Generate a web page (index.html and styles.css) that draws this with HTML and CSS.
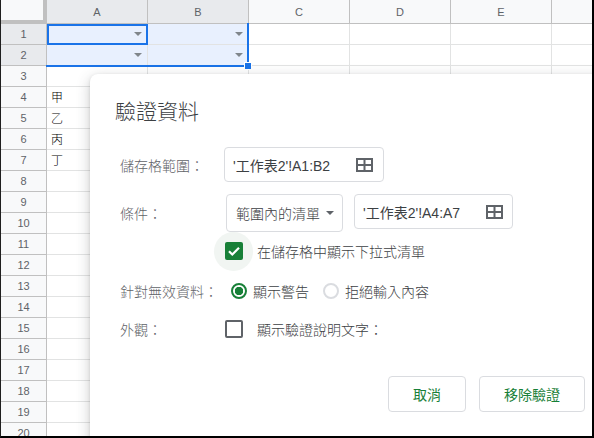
FILE: index.html
```html
<!DOCTYPE html>
<html lang="zh-Hant">
<head>
<meta charset="utf-8">
<title>驗證資料</title>
<link rel="stylesheet" href="styles.css">
</head>
<body>
<div class="screen">
  <div class="sheet">
    <div class="corner"></div>
    <div class="colhead sel">A</div>
    <div class="colhead sel">B</div>
    <div class="colhead">C</div>
    <div class="colhead">D</div>
    <div class="colhead">E</div>
    <div class="colhead"></div>

    <div class="rowhead sel">1</div>
    <div class="cell range"><span class="dd"></span></div>
    <div class="cell range"><span class="dd"></span></div>
    <div class="cell"></div><div class="cell"></div><div class="cell"></div><div class="cell"></div>

    <div class="rowhead sel">2</div>
    <div class="cell range"><span class="dd"></span></div>
    <div class="cell range"><span class="dd"></span></div>
    <div class="cell"></div><div class="cell"></div><div class="cell"></div><div class="cell"></div>

    <div class="rowhead">3</div>
    <div class="cell"></div><div class="cell"></div><div class="cell"></div><div class="cell"></div><div class="cell"></div><div class="cell"></div>

    <div class="rowhead">4</div>
    <div class="cell">甲</div><div class="cell"></div><div class="cell"></div><div class="cell"></div><div class="cell"></div><div class="cell"></div>

    <div class="rowhead">5</div>
    <div class="cell">乙</div><div class="cell"></div><div class="cell"></div><div class="cell"></div><div class="cell"></div><div class="cell"></div>

    <div class="rowhead">6</div>
    <div class="cell">丙</div><div class="cell"></div><div class="cell"></div><div class="cell"></div><div class="cell"></div><div class="cell"></div>

    <div class="rowhead">7</div>
    <div class="cell">丁</div><div class="cell"></div><div class="cell"></div><div class="cell"></div><div class="cell"></div><div class="cell"></div>

    <div class="rowhead">8</div>
    <div class="cell"></div><div class="cell"></div><div class="cell"></div><div class="cell"></div><div class="cell"></div><div class="cell"></div>
    <div class="rowhead">9</div>
    <div class="cell"></div><div class="cell"></div><div class="cell"></div><div class="cell"></div><div class="cell"></div><div class="cell"></div>
    <div class="rowhead">10</div>
    <div class="cell"></div><div class="cell"></div><div class="cell"></div><div class="cell"></div><div class="cell"></div><div class="cell"></div>
    <div class="rowhead">11</div>
    <div class="cell"></div><div class="cell"></div><div class="cell"></div><div class="cell"></div><div class="cell"></div><div class="cell"></div>
    <div class="rowhead">12</div>
    <div class="cell"></div><div class="cell"></div><div class="cell"></div><div class="cell"></div><div class="cell"></div><div class="cell"></div>
    <div class="rowhead">13</div>
    <div class="cell"></div><div class="cell"></div><div class="cell"></div><div class="cell"></div><div class="cell"></div><div class="cell"></div>
    <div class="rowhead">14</div>
    <div class="cell"></div><div class="cell"></div><div class="cell"></div><div class="cell"></div><div class="cell"></div><div class="cell"></div>
    <div class="rowhead">15</div>
    <div class="cell"></div><div class="cell"></div><div class="cell"></div><div class="cell"></div><div class="cell"></div><div class="cell"></div>
    <div class="rowhead">16</div>
    <div class="cell"></div><div class="cell"></div><div class="cell"></div><div class="cell"></div><div class="cell"></div><div class="cell"></div>
    <div class="rowhead">17</div>
    <div class="cell"></div><div class="cell"></div><div class="cell"></div><div class="cell"></div><div class="cell"></div><div class="cell"></div>
    <div class="rowhead">18</div>
    <div class="cell"></div><div class="cell"></div><div class="cell"></div><div class="cell"></div><div class="cell"></div><div class="cell"></div>
    <div class="rowhead">19</div>
    <div class="cell"></div><div class="cell"></div><div class="cell"></div><div class="cell"></div><div class="cell"></div><div class="cell"></div>
    <div class="rowhead">20</div>
    <div class="cell"></div><div class="cell"></div><div class="cell"></div><div class="cell"></div><div class="cell"></div><div class="cell"></div>
  </div>

  <div class="sel-range"></div>
  <div class="sel-active"></div>
  <div class="sel-handle"></div>

  <div class="dialog">
    <h1 class="title">驗證資料</h1>

    <div class="row row-range">
      <div class="label">儲存格範圍：</div>
      <div class="range-input">
        <span class="value">'工作表2'!A1:B2</span>
        <svg class="grid-icon" width="17" height="14" viewBox="0 0 17 14"><rect x="1" y="1" width="15" height="12" fill="none" stroke="#5f6368" stroke-width="2"/><path d="M8.5 1v12M1 7h15" stroke="#5f6368" stroke-width="2" fill="none"/></svg>
      </div>
    </div>

    <div class="row row-cond">
      <div class="label">條件：</div>
      <div class="select">
        <span class="value">範圍內的清單</span>
        <span class="caret"></span>
      </div>
      <div class="range-input second">
        <span class="value">'工作表2'!A4:A7</span>
        <svg class="grid-icon" width="17" height="14" viewBox="0 0 17 14"><rect x="1" y="1" width="15" height="12" fill="none" stroke="#5f6368" stroke-width="2"/><path d="M8.5 1v12M1 7h15" stroke="#5f6368" stroke-width="2" fill="none"/></svg>
      </div>
    </div>

    <div class="row row-check">
      <div class="label"></div>
      <span class="checkbox checked">
        <svg width="18" height="18" viewBox="0 0 18 18"><path d="M4 9.2l3.3 3.3L14 5.8" fill="none" stroke="#fff" stroke-width="2.2"/></svg>
      </span>
      <span class="opt opt-check">在儲存格中顯示下拉式清單</span>
    </div>

    <div class="row row-radio">
      <div class="label">針對無效資料：</div>
      <span class="radio on"></span>
      <span class="opt opt-radio">顯示警告</span>
      <span class="radio"></span>
      <span class="opt opt-radio">拒絕輸入內容</span>
    </div>

    <div class="row row-look">
      <div class="label">外觀：</div>
      <span class="checkbox"></span>
      <span class="opt opt-check">顯示驗證說明文字：</span>
    </div>

    <div class="actions">
      <button class="btn btn-cancel">取消</button>
      <button class="btn btn-remove">移除驗證</button>
    </div>
  </div>
</div>
</body>
</html>
```

FILE: styles.css
```css
html, body {
  margin: 0;
  padding: 0;
  background: #fff;
}

.screen {
  position: relative;
  width: 594px;
  height: 438px;
  box-sizing: border-box;
  border-left: 1px solid #1f1f1f;
  border-right: 2px solid #000;
  border-bottom: 2px solid #000;
  overflow: hidden;
  font-family: "Liberation Sans", "Noto Sans CJK TC", sans-serif;
}

/* ---------- spreadsheet ---------- */
.sheet {
  display: grid;
  grid-template-columns: 46px repeat(6, 101px);
  grid-template-rows: 24px repeat(20, 21px);
  width: 652px;
}

.corner {
  box-sizing: border-box;
  background: #f8f9fa;
  border-right: 4px solid #c0c0c0;
  border-bottom: 4px solid #c0c0c0;
}

.colhead,
.rowhead {
  box-sizing: border-box;
  background: #f8f9fa;
  border-right: 1px solid #c0c0c0;
  border-bottom: 1px solid #c0c0c0;
  color: #5f6368;
  font-size: 11px;
  display: flex;
  align-items: center;
  justify-content: center;
}

.colhead.sel,
.rowhead.sel {
  background: #e8eaed;
}

.cell {
  box-sizing: border-box;
  border-right: 1px solid #e2e3e3;
  border-bottom: 1px solid #e2e3e3;
  font-family: "Noto Sans CJK TC", sans-serif;
  font-weight: 300;
  font-size: 12px;
  line-height: 20px;
  padding-left: 4px;
  color: #000;
}

.cell.range {
  background: #e8f0fe;
  display: flex;
  align-items: center;
  justify-content: flex-end;
  padding-right: 5px;
}

.dd {
  width: 0;
  height: 0;
  border-left: 4px solid transparent;
  border-right: 4px solid transparent;
  border-top: 4px solid #80868b;
}

/* selection overlay */
.sel-range {
  position: absolute;
  left: 45px;
  top: 23px;
  width: 203px;
  height: 44px;
  box-sizing: border-box;
  border-right: 2px solid #1a73e8;
  border-bottom: 2px solid #1a73e8;
}

.sel-active {
  position: absolute;
  left: 46px;
  top: 24px;
  width: 101px;
  height: 21px;
  box-sizing: border-box;
  border: 2px solid #1a73e8;
}

.sel-handle {
  position: absolute;
  left: 244px;
  top: 63px;
  width: 6px;
  height: 6px;
  background: #1a73e8;
  box-shadow: 0 0 0 1px #fff;
}

/* ---------- dialog ---------- */
.dialog {
  position: absolute;
  left: 89px;
  top: 74px;
  width: 520px;
  height: 420px;
  box-sizing: border-box;
  background: #fff;
  border-radius: 8px;
  box-shadow: 0 4px 14px rgba(60, 64, 67, 0.28), 0 1px 3px rgba(60, 64, 67, 0.15);
  padding: 24px 25px 0 30px;
  font-family: "Liberation Sans", "Noto Sans CJK TC", sans-serif;
  font-weight: 300;
  font-size: 14px;
  color: #3c4043;
}

.title {
  margin: 0 0 0 -5px;
  font-size: 21px;
  line-height: 28px;
  font-weight: 300;
  color: #3c4043;
}

.row {
  display: flex;
  align-items: center;
}

.label {
  width: 104px;
  flex: none;
  color: #5f6368;
  font-size: 14px;
}

.row-range {
  height: 35px;
  margin-top: 21px;
}

.row-cond {
  height: 38px;
  margin-top: 12px;
  align-items: flex-start;
}

.row-cond .label {
  align-self: center;
}

.row-check {
  position: relative;
  z-index: 0;
  height: 38px;
}

.row-radio {
  height: 38px;
  margin-top: 2px;
}

.row-look {
  height: 38px;
}

.range-input {
  box-sizing: border-box;
  width: 160px;
  height: 35px;
  border: 1px solid #dadce0;
  border-radius: 4px;
  display: flex;
  align-items: center;
  justify-content: space-between;
  padding: 0 10px 0 8px;
  color: #3c4043;
  font-weight: 400;
}

.range-input.second {
  width: 159px;
  margin-left: 11px;
  padding-right: 9px;
}

.grid-icon {
  flex: none;
}

.select {
  box-sizing: border-box;
  width: 117px;
  height: 38px;
  margin-left: 2px;
  border: 1px solid #dadce0;
  border-radius: 4px;
  display: flex;
  align-items: center;
  justify-content: space-between;
  padding: 0 8px 0 9px;
  color: #3c4043;
}

.caret {
  width: 0;
  height: 0;
  border-left: 4px solid transparent;
  border-right: 4px solid transparent;
  border-top: 4px solid #5f6368;
}

.checkbox {
  position: relative;
  flex: none;
  box-sizing: border-box;
  width: 18px;
  height: 18px;
  margin-left: 1px;
  border: 2px solid #5f6368;
  border-radius: 2px;
  background: #fff;
}

.checkbox.checked {
  border: none;
  background: #188038;
}

.checkbox.checked::before {
  content: "";
  position: absolute;
  left: -11px;
  top: -10px;
  width: 39px;
  height: 39px;
  border-radius: 50%;
  background: #f1f5f2;
  z-index: -1;
}

.checkbox svg {
  display: block;
}

.opt {
  color: #3c4043;
}

.opt-check {
  margin-left: 14px;
}

.radio {
  flex: none;
  box-sizing: border-box;
  width: 16px;
  height: 16px;
  border-radius: 50%;
  border: 2px solid #dadce0;
  margin-left: 14px;
}

.row-radio .label + .radio {
  margin-left: 7px;
}

.radio.on {
  border-color: #188038;
  background: radial-gradient(circle, #188038 0 4px, transparent 4.5px);
}

.opt-radio {
  margin-left: 6px;
}

.actions {
  display: flex;
  justify-content: flex-end;
  gap: 13px;
  margin-top: 28px;
}

.btn {
  box-sizing: border-box;
  height: 36px;
  border: 1px solid #dadce0;
  border-radius: 4px;
  background: #fff;
  color: #188038;
  font-family: "Liberation Sans", "Noto Sans CJK TC", sans-serif;
  font-size: 14px;
  font-weight: 400;
  padding: 0;
}

.btn-cancel {
  width: 78px;
}

.btn-remove {
  width: 106px;
}
```
